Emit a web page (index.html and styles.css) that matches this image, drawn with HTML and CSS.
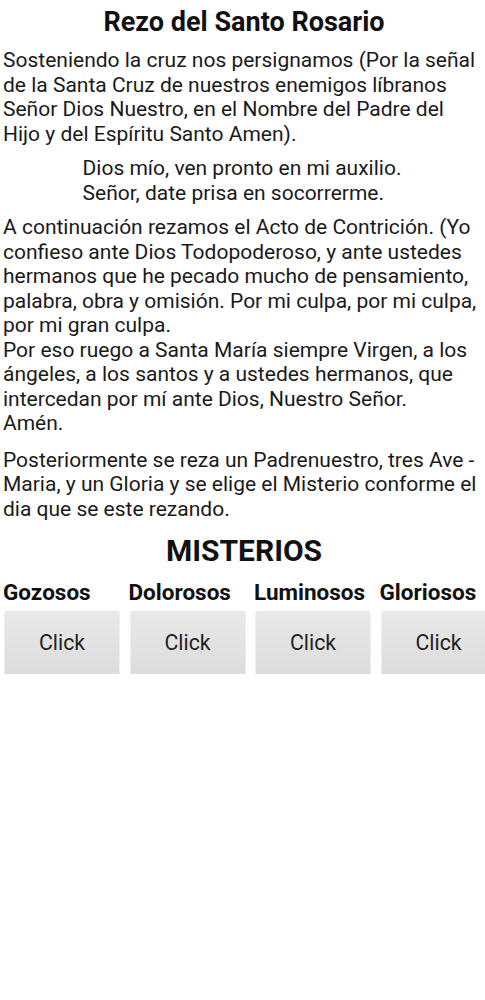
FILE: index.html
```html
<!DOCTYPE html>
<html lang="es">
<head>
<meta charset="utf-8">
<title>Rezo del Santo Rosario</title>
<link rel="stylesheet" href="styles.css">
</head>
<body>
<main class="page">
  <h1 class="title">Rezo del Santo Rosario</h1>
  <p class="text first">Sosteniendo la cruz nos persignamos (Por la señal de la Santa Cruz de nuestros enemigos líbranos Señor Dios Nuestro, en el Nombre del Padre del Hijo y del Espíritu Santo Amen).</p>
  <div class="invocation">
    <p class="invocation-text">Dios mío, ven pronto en mi auxilio.<br>Señor, date prisa en socorrerme.</p>
  </div>
  <p class="text">A continuación rezamos el Acto de Contrición. (Yo confieso ante Dios Todopoderoso, y ante ustedes hermanos que he pecado mucho de pensamiento, palabra, obra y omisión. Por mi culpa, por mi culpa, por mi gran culpa.<br>Por eso ruego a Santa María siempre Virgen, a los ángeles, a los santos y a ustedes hermanos, que intercedan por mí ante Dios, Nuestro Señor.<br>Amén.</p>
  <p class="text last">Posteriormente se reza un Padrenuestro, tres Ave - Maria, y un Gloria y se elige el Misterio conforme el dia que se este rezando.</p>
  <h2 class="subtitle">MISTERIOS</h2>
  <div class="mysteries">
    <div class="mystery">
      <span class="mystery-name">Gozosos</span>
      <button class="btn" type="button">Click</button>
    </div>
    <div class="mystery">
      <span class="mystery-name">Dolorosos</span>
      <button class="btn" type="button">Click</button>
    </div>
    <div class="mystery">
      <span class="mystery-name">Luminosos</span>
      <button class="btn" type="button">Click</button>
    </div>
    <div class="mystery">
      <span class="mystery-name">Gloriosos</span>
      <button class="btn" type="button">Click</button>
    </div>
  </div>
</main>
</body>
</html>
```

FILE: styles.css
```css
html, body {
  margin: 0;
  padding: 0;
  background: #ffffff;
  overflow-x: hidden;
}

body {
  font-family: Roboto, "Noto Sans", "Liberation Sans", sans-serif;
  color: #1a1a1a;
}

.page {
  padding: 6px 0 0 3px;
}

.title {
  margin: 0;
  font-size: 27px;
  font-weight: 700;
  line-height: 32px;
  text-align: center;
  color: #111;
}

.text {
  margin: 10px 0 0 0;
  font-size: 21px;
  line-height: 24.5px;
  padding-right: 3px;
}

.text.first {
  margin-top: 10.3px;
}

.text.last {
  margin-top: 12px;
}

.invocation {
  margin-top: 10px;
  text-align: center;
}

.invocation-text {
  display: inline-block;
  margin: 0 4px 0 0;
  text-align: left;
  font-size: 21px;
  line-height: 24.5px;
}

.subtitle {
  margin: 12px 0 0 0;
  font-size: 30px;
  font-weight: 700;
  line-height: 36px;
  text-align: center;
  color: #111;
}

.mysteries {
  display: flex;
  margin-top: 10px;
  width: 502px;
}

.mystery {
  flex: 0 0 125.5px;
  display: flex;
  flex-direction: column;
}

.mystery-name {
  font-size: 22.5px;
  font-weight: 700;
  line-height: 26px;
  color: #111;
  white-space: nowrap;
}

.btn {
  margin: 5.7px 0 0 2px;
  width: 114px;
  height: 63px;
  border: none;
  border-radius: 2px;
  background: linear-gradient(#e9e9e9, #dcdcdc);
  box-shadow: 0 1px 0 #b8b8b8, 0 2px 2px rgba(0, 0, 0, 0.16), 0 0 1px rgba(0, 0, 0, 0.25);
  font-family: Roboto, "Noto Sans", "Liberation Sans", sans-serif;
  font-size: 21.3px;
  color: #222;
  padding: 0;
}
```
